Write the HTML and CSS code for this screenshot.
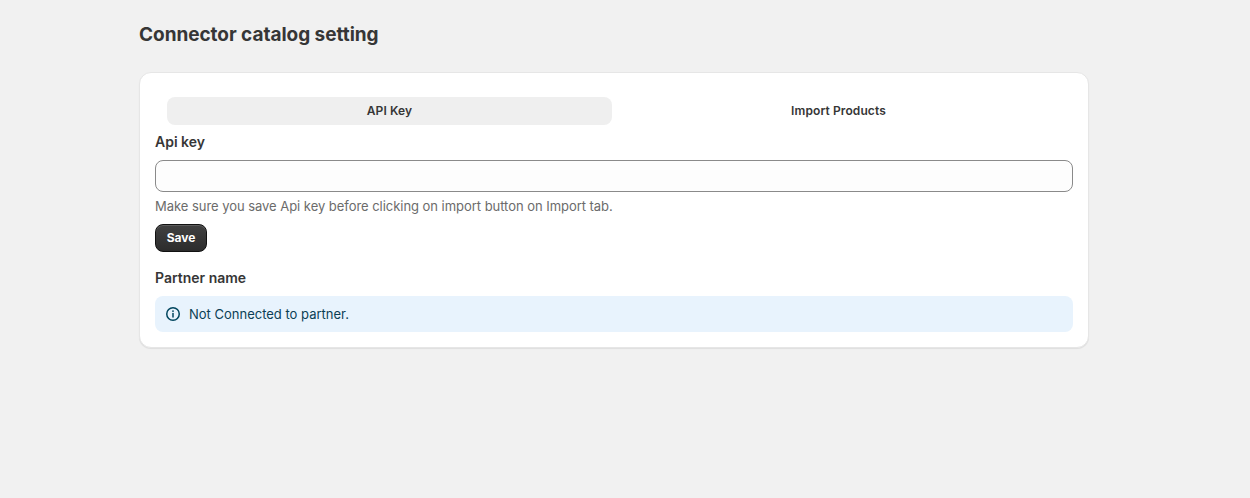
FILE: index.html
```html
<!DOCTYPE html>
<html lang="en">
<head>
    <meta charset="UTF-8">
    <title>Connector catalog setting</title>
    <link rel="stylesheet" href="styles.css">
</head>
<body>
    <div class="page">
        <h1 class="page-title">Connector catalog setting</h1>

        <div class="card">
            <div class="tabs">
                <button class="tab tab-active">API Key</button>
                <button class="tab">Import Products</button>
            </div>

            <label class="label" for="api-key">Api key</label>
            <input class="text-input" id="api-key" type="text">
            <p class="help">Make sure you save Api key before clicking on import button on Import tab.</p>
            <button class="save-btn">Save</button>

            <h2 class="label partner-label">Partner name</h2>
            <div class="banner">
                <svg class="banner-icon" width="16" height="16" viewBox="0 0 16 16" fill="none">
                    <circle cx="8" cy="8" r="6.25" stroke="#00455e" stroke-width="1.5"/>
                    <path d="M8 7.4v3.6" stroke="#00455e" stroke-width="1.5" stroke-linecap="round"/>
                    <circle cx="8" cy="5.1" r="0.95" fill="#00455e"/>
                </svg>
                <span>Not Connected to partner.</span>
            </div>
        </div>
    </div>
</body>
</html>
```

FILE: styles.css
```css
* {
    box-sizing: border-box;
}
body {
    margin: 0;
    height: 498px;
    overflow: hidden;
    background-color: #f1f1f1;
    color: #303030;
    font-family: Inter, "Liberation Sans", sans-serif;
    font-size: 13px;
}
.page {
    width: 950px;
    margin-left: 139px;
    padding-top: 23px;
}
.page-title {
    margin: 0 0 25px;
    font-size: 19px;
    line-height: 24px;
    font-weight: 650;
    letter-spacing: -0.04px;
    color: #363636;
}
.card {
    height: 276px;
    padding: 24px 15px 16px 15px;
    background-color: #fff;
    border: 1px solid #e6e6e6;
    border-radius: 12px;
    box-shadow: 0 1px 1px rgba(0,0,0,0.08);
}
.tabs {
    display: flex;
    gap: 4px;
    padding: 0 12px;
}
.tab {
    flex: 1;
    height: 28px;
    padding: 0 0 2px;
    border: 0;
    border-radius: 8px;
    background: none;
    color: #363636;
    font-family: inherit;
    font-size: 12px;
    font-weight: 600;
    letter-spacing: 0.1px;
}
.tab-active {
    background-color: #efefef;
}
.label {
    display: block;
    margin: 0;
    font-size: 14px;
    line-height: 20px;
    font-weight: 600;
    color: #363636;
}
.tabs + .label {
    margin-top: 7px;
}
.text-input {
    display: block;
    width: 100%;
    height: 32px;
    margin-top: 8px;
    background-color: #fdfdfd;
    border: 1px solid #8a8a8a;
    border-radius: 8px;
}
.help {
    margin: 5px 0 0;
    font-size: 13px;
    line-height: 18px;
    letter-spacing: -0.04px;
    color: #6b6b6b;
}
.save-btn {
    display: block;
    width: 52px;
    height: 28px;
    margin-top: 9px;
    padding: 0 0 2px;
    border: 1px solid #111;
    border-radius: 8px;
    background: linear-gradient(#414141, #2c2c2c);
    box-shadow: inset 0 1px 0 rgba(255,255,255,0.15);
    color: #fff;
    font-family: inherit;
    font-size: 12px;
    font-weight: 650;
}
.partner-label {
    margin-top: 16px;
}
.banner {
    display: flex;
    align-items: center;
    gap: 8px;
    height: 36px;
    margin-top: 8px;
    padding: 0 10px;
    background-color: #e8f3fd;
    border-radius: 8px;
    color: #0b3f55;
    line-height: 20px;
}
.banner-icon {
    flex: none;
}
```
